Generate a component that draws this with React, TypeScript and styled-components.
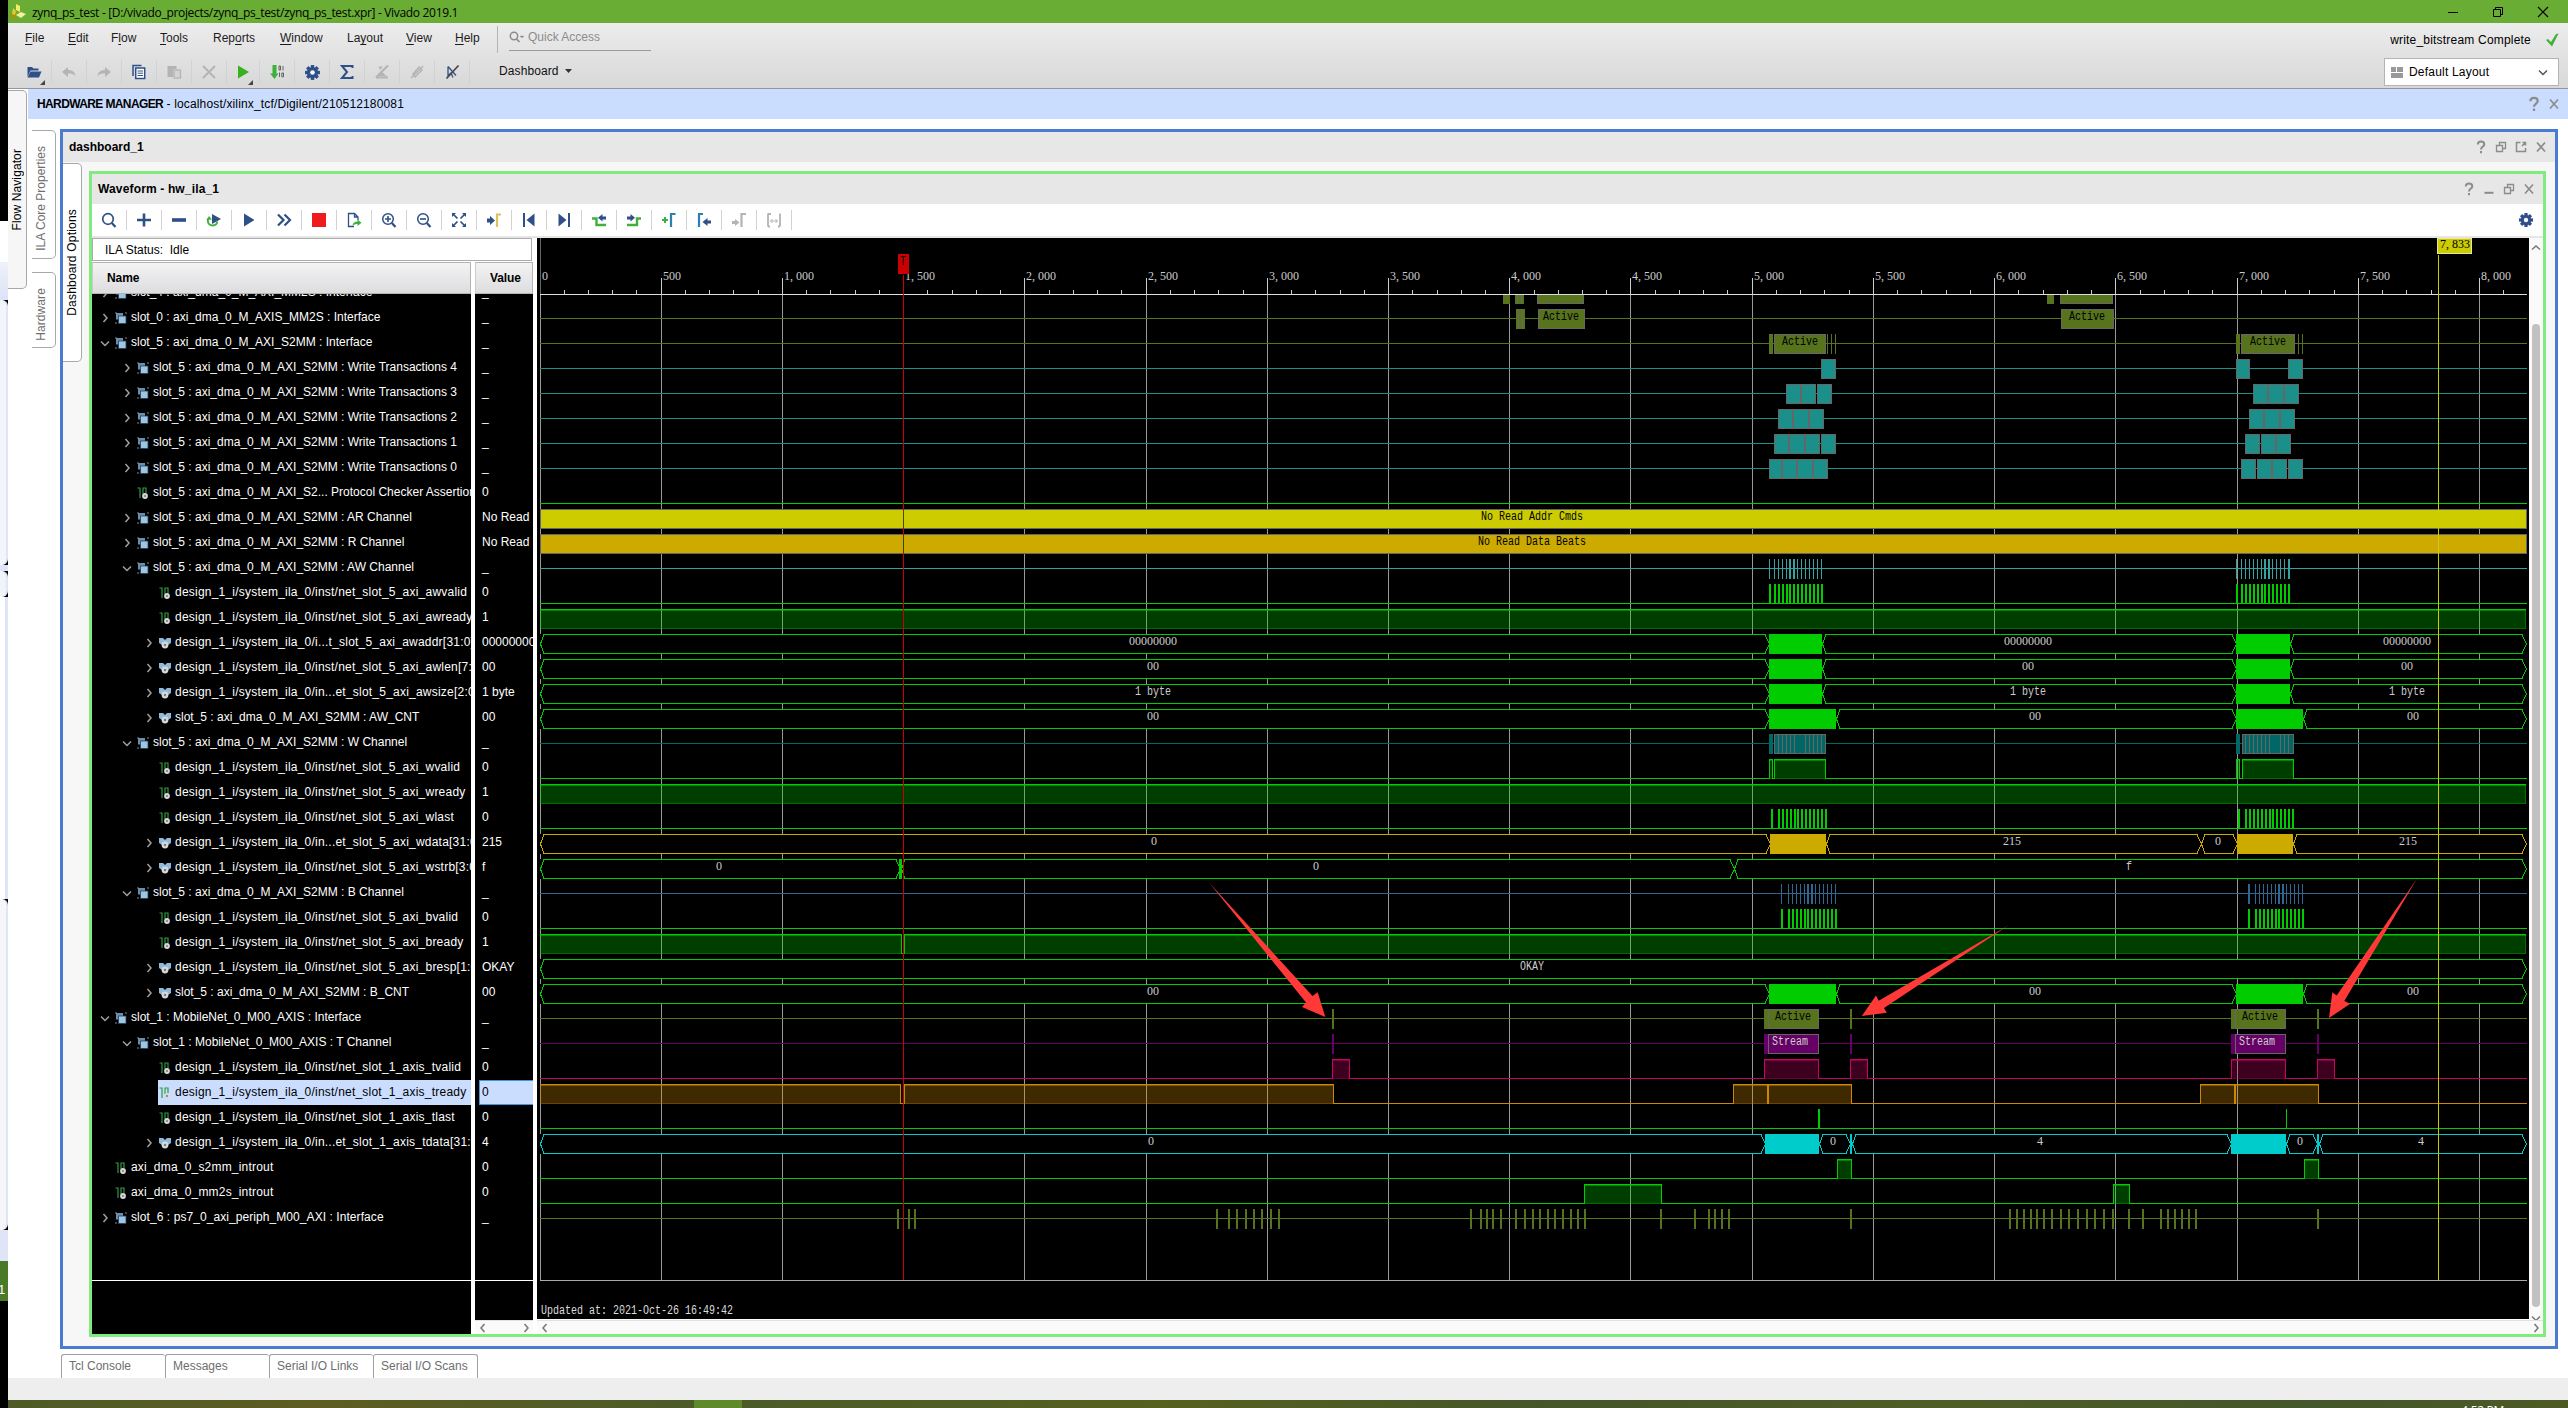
import React from "react";
import styled, { createGlobalStyle, css } from "styled-components";

const Global = createGlobalStyle`
  * { box-sizing: border-box; }
  html, body { margin: 0; padding: 0; background: #000; }
  body { width: 2568px; height: 1408px; overflow: hidden; font: 12px "Liberation Sans", Arial, sans-serif; color: #000; }
  svg { display: block; flex: none; }
`;

const Screen = styled.div`display: flex; width: 2568px; height: 1408px; overflow: hidden;`;

/* ---------- strip of the window behind ---------- */
const Strip = styled.div`width: 8px; display: flex; flex-direction: column; background: #000; overflow: hidden;`;
const StripPart = styled.div<{ $h: number; $bg: string }>`
  height: ${(p) => p.$h}px; flex: none; background: ${(p) => p.$bg}; color: #fff; font-size: 13px; overflow: hidden;
`;
const StripDigit = styled.div`margin: 21px 0 0 -2px;`;
const StripCard = styled.div<{ $h: number; $bg: string }>`
  height: ${(p) => p.$h}px; flex: none; background: ${(p) => p.$bg};
  border: 1px solid #f8faff; border-left: 0; border-right: 2px solid #e0e5f6; border-radius: 0 6px 6px 0;
`;

const Win = styled.div`flex: 1; display: flex; flex-direction: column; background: #fff; min-width: 0;`;

const TitleBar = styled.div`
  height: 23px; background: #6aad34; display: flex; align-items: center; padding-left: 1px; gap: 6px;
`;
const TitleText = styled.span`
  flex: 1; font: 12px/23px "Open Sans", "Noto Sans", sans-serif; letter-spacing: -0.32px; white-space: pre; padding-top: 2px;
`;
const WinButtons = styled.div`display: flex; gap: 33px; padding-right: 19px; height: 20px; align-items: center;`;

const Chrome = styled.div`
  height: 66px; display: flex; background: linear-gradient(#ececec, #d8d8d8); border-bottom: 1px solid #969696;
`;
const ChromeLeft = styled.div`flex: 1; display: flex; flex-direction: column;`;
const MenuRow = styled.div`height: 31px; display: flex; padding-left: 17px;`;
const MenuItem = styled.div<{ $w: number }>`
  width: ${(p) => p.$w}px; flex: none; line-height: 31px; color: #1c1c1c; white-space: pre;
  u { text-underline-offset: 2px; text-decoration-thickness: 1px; }
`;
const MenuRule = styled.div`width: 1px; height: 27px; margin: 3px 11px 0 0; background: #b4b4b4;`;
const Quick = styled.div`
  width: 142px; height: 28px; border-bottom: 1px solid #9a9a9a; display: flex; align-items: center; gap: 3px; color: #8c8c8c;
`;
const ToolRow = styled.div`height: 34px; display: flex; align-items: center; padding-left: 9px;`;
const ToolCell = styled.div<{ $w: number }>`
  width: ${(p) => p.$w}px; height: 24px; display: flex; align-items: center; justify-content: center; position: relative;
  border-right: 1px solid #d2d2d2; margin-top: 2px;
`;
const Corner = styled.i`
  position: absolute; right: 6px; bottom: -1px; width: 0; height: 0; border-left: 5px solid transparent; border-bottom: 5px solid #444;
`;
const DashMenu = styled.div`margin-left: 29px; display: flex; align-items: center; gap: 6px; color: #111; letter-spacing: 0.1px;`;
const ChromeRight = styled.div`width: 184px; padding-right: 9px; display: flex; flex-direction: column;`;
const Status = styled.div`
  height: 35px; display: flex; align-items: center; justify-content: flex-end; padding: 0 0 2px; gap: 14px; white-space: pre; letter-spacing: 0.2px;
`;
const Combo = styled.div`
  height: 28px; width: 175px; border: 1px solid #b4b4b4; background: #fff; display: flex; align-items: center; padding: 0 10px 0 6px; gap: 6px;
  letter-spacing: 0.2px;
  span { flex: 1; }
`;

const Body = styled.div`height: 1289px; display: flex;`;
const NavCol = styled.div`width: 20px;`;
const vtext = css`writing-mode: vertical-rl; transform: rotate(180deg); white-space: pre; line-height: 14px;`;
const VText = styled.span<{ $ls?: number }>`${vtext} letter-spacing: ${(p) => p.$ls ?? 0}px;`;
const SideTab = styled.div<{ $h: number; $w: number; $mt: number; $bg?: string; $fg?: string; $push?: number; $pr?: number }>`
  width: ${(p) => p.$w}px; height: ${(p) => p.$h}px; margin-top: ${(p) => p.$mt}px; flex: none;
  border: 1px solid #a8a8a8; border-left: 0; border-radius: 0 5px 5px 0; background: ${(p) => p.$bg ?? "#fff"};
  color: ${(p) => p.$fg ?? "#000"}; display: flex; justify-content: center; align-items: center;
  padding: ${(p) => p.$push ?? 0}px ${(p) => p.$pr ?? 0}px 0 0;
`;
const Main = styled.div`flex: 1; display: flex; flex-direction: column; min-width: 0;`;
const HwBar = styled.div`
  height: 30px; background: #cbddff; display: flex; align-items: center; padding: 0 6px 0 9px; white-space: pre;
  b { letter-spacing: -0.62px; }
  span { flex: 1; letter-spacing: 0.15px; }
`;
const Work = styled.div`flex: 1; display: flex; min-height: 0;`;
const SideTabs = styled.div`width: 32px; padding-left: 4px; display: flex; flex-direction: column;`;
const Center = styled.div`flex: 1; display: flex; flex-direction: column; padding: 10px 10px 0 0; min-width: 0;`;
const Dashboard = styled.div`
  height: 1220px; border: 3px solid #4a7bd0; background: #f7f7f7; display: flex; flex-direction: column;
`;
const PanelHead = styled.div<{ $ls?: number }>`
  height: 30px; flex: none; background: #e7e7e7; display: flex; align-items: center; font-weight: bold;
  padding: 0 6px; letter-spacing: ${(p) => p.$ls ?? 0}px;
  span { flex: 1; }
`;
const HeadIcons = styled.div<{ $gap?: number }>`display: flex; gap: ${(p) => p.$gap ?? 4}px; align-items: center;`;
const DashBody = styled.div`flex: 1; display: flex; min-height: 0;`;
const DashOptCol = styled.div`width: 26px; flex: none;`;
const Wave = styled.div`
  width: 2457px; height: 1166px; margin-top: 9px; border: 3px solid #82eb7d; background: #fff; display: flex; flex-direction: column;
`;
const WaveTools = styled.div`
  height: 34px; flex: none; border-bottom: 2px solid #e6e6e6; display: flex; align-items: center; padding-right: 9px;
`;
const WCell = styled.div`
  width: 35px; height: 20px; border-right: 1px solid #d2d2d2; display: flex; align-items: center; justify-content: center;
`;
const Grow = styled.div`flex: 1;`;

const WaveBody = styled.div`flex: 1; display: flex; min-height: 0;`;
const LeftPane = styled.div`width: 445px; flex: none; display: flex; flex-direction: column;`;
const IlaStatus = styled.div`
  width: 440px; height: 23px; border: 1px solid #ababab; line-height: 22px; padding-left: 12px; white-space: pre;
`;
const Cols = styled.div`flex: 1; display: flex; gap: 4px; margin-top: 1px; min-height: 0;`;
const NameCol = styled.div`width: 379px; display: flex; flex-direction: column;`;
const ValueCol = styled.div`width: 58px; display: flex; flex-direction: column;`;
const ColHead = styled.div`
  height: 32px; flex: none; border: 1px solid #b4b4b4; background: linear-gradient(#f3f3f3, #dddde0); font-weight: bold;
  line-height: 30px; padding-left: 14px; border-left-color: #ccc; letter-spacing: -0.1px;
`;
const List = styled.div`background: #000; color: #fff; flex: 1; overflow: hidden; display: flex; flex-direction: column; min-height: 0;`;
const ListRows = styled.div`height: 987px; flex: none; overflow: hidden; border-bottom: 1px solid #fff;`;
const Rows = styled.div`margin-top: -14px;`;
const Row = styled.div<{ $lv: number }>`
  height: 25px; padding-left: ${(p) => 8 + p.$lv * 22}px; display: flex; align-items: stretch; white-space: pre;
`;
const Twist = styled.div`width: 14px; display: flex; align-items: center; flex: none;`;
const NameCell = styled.div<{ $sel?: boolean; $ls: number }>`
  flex: 1; display: flex; align-items: center; gap: 4px; overflow: hidden; padding-left: 1px;
  background: ${(p) => (p.$sel ? "#cbddff" : "transparent")}; color: ${(p) => (p.$sel ? "#000" : "#fff")};
  letter-spacing: ${(p) => p.$ls}px;
  span { line-height: 24px; height: 25px; }
`;
const ValueCell = styled.div<{ $sel?: boolean }>`
  height: 25px; margin-left: 4px; padding-left: 2px; line-height: 22px; border: 1px solid ${(p) => (p.$sel ? "#3f97dd" : "transparent")};
  border-right-width: 0;
  background: ${(p) => (p.$sel ? "#cbddff" : "transparent")}; color: ${(p) => (p.$sel ? "#000" : "#fff")};
  white-space: pre; overflow: hidden;
`;
const HScroll = styled.div`
  height: 14px; flex: none; background: #fafafa; border-top: 1px solid #e2e2e2; display: flex; justify-content: space-between; align-items: center; padding: 0 2px 0 3px;
`;
const Right = styled.div`flex: 1; display: flex; flex-direction: column; min-width: 0;`;
const RightTop = styled.div`height: 1081px; display: flex; margin-bottom: 1px;`;
const VScroll = styled.div`
  width: 14px; background: #fafafa; display: flex; flex-direction: column; align-items: center; padding: 5px 0 1px;
`;
const Thumb = styled.div`width: 8px; height: 983px; margin: 71px 0 6px; border-radius: 4px; background: #c1c1c1; flex: none;`;

const BottomTabs = styled.div`display: flex; margin: 5px 0 0 1px;`;
const BottomTab = styled.div`
  width: 104px; height: 24px; border: 1px solid #a0a0a0; border-bottom: 0; border-right-width: 0; border-radius: 3px 3px 0 0;
  color: #6e6e6e; line-height: 22px; padding-left: 7px; white-space: pre;
  &:last-child { border-right-width: 1px; width: 105px; }
`;
const Foot = styled.div`height: 22px; background: #eee; flex: none;`;
const TaskBar = styled.div`
  height: 8px; background: linear-gradient(90deg, #4d5a25, #5e5c22 12%, #4a5a28 28%, #56601f 45%, #445529 60%, #4e5c26 75%, #43562b 90%, #4d5a25);
  display: flex; overflow: hidden; color: #fff;
`;
const TaskActive = styled.div`width: 48px; height: 8px; margin-left: 686px; background: #5f8a2c;`;
const Clock = styled.div`margin: 4px 64px 0 auto; font: 12px/14px "Open Sans", sans-serif; letter-spacing: -0.3px; white-space: pre;`;

/* ---------- icons ---------- */
const NAVY = "#2f4f88";
const GREEN = "#3fb03c";
const GREY = "#b4b4b4";
const Ico = ({ children, s = 16 }: { children: React.ReactNode; s?: number }) => (
  <svg width={s} height={s} viewBox="0 0 16 16" fill="none">{children}</svg>
);
const Gear = ({ s = 16 }: { s?: number }) => (
  <Ico s={s}>
    <g fill={NAVY}>
      {[0, 45, 90, 135].map((a) => <rect key={a} x="6.400" y="1" width="3.200" height="14" transform={`rotate(${a} 8 8)`} />)}
      <circle cx="8" cy="8" r="5.200" />
    </g>
    <circle cx="8" cy="8" r="2.200" fill="#f4f4f4" />
  </Ico>
);
const Q = ({ s = 12 }: { s?: number }) => (
  <svg width={s + 4} height={s + 4} viewBox="0 0 16 16" fill="none" stroke="#8c8c8c" strokeWidth="2">
    <path d="M4.800 5.600C4.800 3.600 6 2.600 8 2.600s3.300 1 3.300 2.800C11.300 7.500 8 7.800 8 10.500" /><path d="M8 12v2.200" />
  </svg>
);
const Cross = () => <Ico><path d="M4 3.500l8 9M12 3.500l-8 9" stroke="#8c8c8c" strokeWidth="1.700" /></Ico>;
const Restore = () => <Ico><path d="M6.500 6V3.500h6v6H10M3.500 6.500h6v6h-6z" stroke="#8c8c8c" strokeWidth="1.300" /></Ico>;
const Popout = () => <Ico><path d="M7.500 3.500h-4v9h9V9M9 7l3.500-3.500M9.500 3.500h3v3" stroke="#8c8c8c" strokeWidth="1.500" /></Ico>;
const Mini = () => <Ico><path d="M3.500 11.800h9" stroke="#8c8c8c" strokeWidth="2" /></Ico>;
const Chev = ({ d, c = "#777", s = 10 }: { d: "l" | "r" | "u" | "d"; c?: string; s?: number }) => {
  const p = { l: "M6.500 1L3 5l3.500 4", r: "M3.500 1L7 5 3.500 9", u: "M1 6.500L5 3l4 3.500", d: "M1 3.500L5 7.500l4-4" }[d];
  return <svg width={s} height={s} viewBox="0 0 10 10" fill="none"><path d={p} stroke={c} strokeWidth="1.500" /></svg>;
};

const mainIcons: React.ReactNode[] = [
  <Ico><path d="M1.500 13V3h4.500l1.500 1.500h5V6.500H4.500z" fill={NAVY} /><path d="M4.500 7.500h11l-2.500 6H1.500z" fill={NAVY} /></Ico>,
  <Ico><path d="M1 8l6-5v3c4 0 7 2 7.500 6-2-2-4-2.500-7.500-2.500V13z" fill={GREY} /></Ico>,
  <Ico><path d="M15 8L9 3v3C5 6 2 8 1.500 12c2-2 4-2.500 7.500-2.500V13z" fill={GREY} /></Ico>,
  <Ico><path d="M2 12V1.500h8.500" stroke={NAVY} strokeWidth="1.500" /><rect x="4.700" y="4" width="9" height="10.500" fill="#fff" stroke={NAVY} strokeWidth="1.500" /><path d="M6.500 7h5.500M6.500 9.200h5.500M6.500 11.500h5.500" stroke={NAVY} /></Ico>,
  <Ico><path d="M1.500 2h9v3H7v8H1.500z" fill={GREY} /><rect x="8" y="6" width="6.500" height="8" fill="#d4d4d4" stroke={GREY} strokeWidth="1.300" /></Ico>,
  <Ico><path d="M2 2l12 12M14 2L2 14" stroke={GREY} strokeWidth="2" /></Ico>,
  <Ico><path d="M3 1.500l11 6.500-11 6.500z" fill="#37b21f" /></Ico>,
  <Ico><path d="M3.500 1h4v8.500h2L5.500 15 1 9.500h2.500z" fill={GREEN} /><path d="M10 2h1.500v4H10zM14 2v4.500M10.500 8.500V13M12.800 9h1.700v3.800h-1.700z" stroke="#555" strokeWidth="0.900" /></Ico>,
  <Gear s={17} />,
  <Ico><path d="M13.500 4V2H3l5 6-5 6h10.500v-2" stroke={NAVY} strokeWidth="2" /></Ico>,
  <Ico><path d="M2 13.500h12" stroke={GREY} strokeWidth="2" /><path d="M3 12l4-5 6 5.500zM4.500 2.500h4.500L6 6z" fill={GREY} /><path d="M14 1.500L2 13.500" stroke={GREY} strokeWidth="2.200" /></Ico>,
  <Ico><path d="M14 2L2 14M4 10l6-7 3 3-7 7z" stroke={GREY} strokeWidth="1.500" /></Ico>,
  <Ico><path d="M4 2.500l8 9M4 2.500v9l3-2.500 2 4.500" stroke={NAVY} strokeWidth="1.300" /><path d="M14.500 1.500l-12 13" stroke="#4a4a4a" strokeWidth="1.800" /></Ico>,
];

const waveIcons: React.ReactNode[] = [
  <Ico><circle cx="7" cy="7" r="5.300" stroke={NAVY} strokeWidth="1.700" /><path d="M10.800 11L14.500 15" stroke={NAVY} strokeWidth="2.200" /></Ico>,
  <Ico><path d="M8 1.500v13M1 8h14" stroke={NAVY} strokeWidth="2.600" /></Ico>,
  <Ico><path d="M1 8h14" stroke={NAVY} strokeWidth="3.600" /></Ico>,
  <Ico><path d="M6 2l9 5-9 5z" fill={NAVY} /><path d="M2 6.500c-1 4 1 7 4.500 7S11.500 11 11 9.500" stroke={GREEN} strokeWidth="2" /><path d="M0.500 8L3 4l3 3.500z" fill={GREEN} /></Ico>,
  <Ico><path d="M3 1.500L13.500 8 3 14.500z" fill={NAVY} /></Ico>,
  <Ico><path d="M2 2.500L7.500 8 2 13.500M8.500 2.500L14 8l-5.500 5.500" stroke={NAVY} strokeWidth="2.200" /></Ico>,
  <Ico><rect x="1" y="1" width="14" height="14" fill="#ee1c1c" /></Ico>,
  <Ico><path d="M8 14.500H2.500v-13h6l3.500 3.500v3M8.500 1.500V5H12" stroke={NAVY} strokeWidth="1.300" /><path d="M6.500 14c0-3 2-4.500 5-4.500V7.500l4 3.300-4 3.200v-2c-2 0-3.500.500-5 2z" fill={GREEN} /></Ico>,
  <Ico><circle cx="7" cy="7" r="5.300" stroke={NAVY} strokeWidth="1.500" /><path d="M10.800 11L14.500 15" stroke={NAVY} strokeWidth="2.200" /><path d="M7 4v6M4 7h6" stroke={NAVY} strokeWidth="1.600" /></Ico>,
  <Ico><circle cx="7" cy="7" r="5.300" stroke={NAVY} strokeWidth="1.500" /><path d="M10.800 11L14.500 15" stroke={NAVY} strokeWidth="2.200" /><path d="M4 7h6" stroke={NAVY} strokeWidth="1.600" /></Ico>,
  <Ico><path d="M1 5V1h4zM11 1h4v4zM15 11v4h-4zM5 15H1v-4z" fill={NAVY} /><path d="M2 2l4.500 4.500M14 2L9.500 6.500M14 14L9.500 9.500M2 14l4.500-4.500" stroke={NAVY} strokeWidth="1.700" /></Ico>,
  <Ico><path d="M1 6.500h3V4l5 4.500-5 4.500v-2.500H1z" fill={NAVY} /><path d="M11 15V2.500h4" stroke="#dfc15a" strokeWidth="2.200" /></Ico>,
  <Ico><path d="M3 1v14" stroke={NAVY} strokeWidth="2" /><path d="M13.500 1.500v13L5.500 8z" fill={NAVY} /></Ico>,
  <Ico><path d="M13 1v14" stroke={NAVY} strokeWidth="2" /><path d="M2.500 1.500v13L10.500 8z" fill={NAVY} /></Ico>,
  <Ico><path d="M1 6.500h4.500v6.500H15" stroke={GREEN} strokeWidth="2.400" /><path d="M15 4.500h-3.500V2L7 5.800 11.500 9.500V7.500H15z" fill={NAVY} /></Ico>,
  <Ico><path d="M15 6.500h-4v6.500H1" stroke={GREEN} strokeWidth="2.400" /><path d="M1 4.500h3.500V2L9 5.800 4.500 9.500V7.500H1z" fill={NAVY} /></Ico>,
  <Ico><path d="M1 8h6M4 5v6" stroke={GREEN} strokeWidth="2" /><path d="M10 15V2h4.500" stroke="#2e7fb4" strokeWidth="2.200" /></Ico>,
  <Ico><path d="M3 15V2h4" stroke="#2e7fb4" strokeWidth="2.200" /><path d="M15 8.500h-3.500V6L6.500 10l5 4v-2.500H15z" fill={NAVY} /></Ico>,
  <Ico><path d="M1 9h3V7l4.500 3.500L4 14v-2H1z" fill={GREY} /><path d="M10.500 15V2h4.500" stroke={GREY} strokeWidth="2.200" /></Ico>,
  <Ico><path d="M2 1.500v13M5 2H2M14 1.500v13M2 14.500h2M12 14.500h2" stroke={GREY} strokeWidth="1.800" /><path d="M4.500 9h7M6.500 7L4.500 9l2 2M9.500 7l2 2-2 2" stroke={GREY} /></Ico>,
];

const TreeIcon = ({ k }: { k: "i" | "s" | "b" }) => {
  if (k === "i")
    return (
      <svg width="12" height="12" viewBox="0 0 12 12">
        <path d="M0 0h2v2H0zM10 0h2v2h-2zM0 10h2v2H0z" fill="#444" />
        <rect x="1" y="1" width="7" height="6.500" fill="#6a8fae" />
        <rect x="3.500" y="4" width="7.500" height="7.500" fill="#9cc6e6" stroke="#2c3e50" strokeWidth="0.800" />
      </svg>
    );
  if (k === "s")
    return (
      <svg width="12" height="12" viewBox="0 0 12 12" fill="none">
        <path d="M0.500 1h2.500v10M6 7V1h3v5" stroke="#2f9b45" strokeWidth="1.200" />
        <circle cx="8" cy="9" r="2.900" fill="#d8d8d8" /><circle cx="8" cy="9" r="1" fill="#777" />
      </svg>
    );
  return (
    <svg width="12" height="12" viewBox="0 0 12 12">
      <path d="M0 1h4l2 2 2-2h4v5L9 8H3L0 6z" fill="#8fb9d8" />
      <circle cx="6" cy="8" r="3.400" fill="#d8d8d8" /><circle cx="6" cy="8" r="1.200" fill="#777" />
    </svg>
  );
};

/* ---------- signal tree ---------- */
type Item = [number, "i" | "s" | "b", "r" | "d" | "", string, string];
const M = "slot_5 : axi_dma_0_M_AXI_S2MM : ";
const D = "design_1_i/system_ila_0/";
const items: Item[] = [
  [0, "i", "r", "slot_4 : axi_dma_0_M_AXI_MM2S : Interface", "_"],
  [0, "i", "r", "slot_0 : axi_dma_0_M_AXIS_MM2S : Interface", "_"],
  [0, "i", "d", M + "Interface", "_"],
  [1, "i", "r", M + "Write Transactions 4", "_"],
  [1, "i", "r", M + "Write Transactions 3", "_"],
  [1, "i", "r", M + "Write Transactions 2", "_"],
  [1, "i", "r", M + "Write Transactions 1", "_"],
  [1, "i", "r", M + "Write Transactions 0", "_"],
  [1, "s", "", "slot_5 : axi_dma_0_M_AXI_S2... Protocol Checker Assertion", "0"],
  [1, "i", "r", M + "AR Channel", "No Read"],
  [1, "i", "r", M + "R Channel", "No Read"],
  [1, "i", "d", M + "AW Channel", "_"],
  [2, "s", "", D + "inst/net_slot_5_axi_awvalid", "0"],
  [2, "s", "", D + "inst/net_slot_5_axi_awready", "1"],
  [2, "b", "r", D + "i...t_slot_5_axi_awaddr[31:0]", "00000000"],
  [2, "b", "r", D + "inst/net_slot_5_axi_awlen[7:0]", "00"],
  [2, "b", "r", D + "in...et_slot_5_axi_awsize[2:0]", "1 byte"],
  [2, "b", "r", M + "AW_CNT", "00"],
  [1, "i", "d", M + "W Channel", "_"],
  [2, "s", "", D + "inst/net_slot_5_axi_wvalid", "0"],
  [2, "s", "", D + "inst/net_slot_5_axi_wready", "1"],
  [2, "s", "", D + "inst/net_slot_5_axi_wlast", "0"],
  [2, "b", "r", D + "in...et_slot_5_axi_wdata[31:0]", "215"],
  [2, "b", "r", D + "inst/net_slot_5_axi_wstrb[3:0]", "f"],
  [1, "i", "d", M + "B Channel", "_"],
  [2, "s", "", D + "inst/net_slot_5_axi_bvalid", "0"],
  [2, "s", "", D + "inst/net_slot_5_axi_bready", "1"],
  [2, "b", "r", D + "inst/net_slot_5_axi_bresp[1:0]", "OKAY"],
  [2, "b", "r", M + "B_CNT", "00"],
  [0, "i", "d", "slot_1 : MobileNet_0_M00_AXIS : Interface", "_"],
  [1, "i", "d", "slot_1 : MobileNet_0_M00_AXIS : T Channel", "_"],
  [2, "s", "", D + "inst/net_slot_1_axis_tvalid", "0"],
  [2, "s", "", D + "inst/net_slot_1_axis_tready", "0"],
  [2, "s", "", D + "inst/net_slot_1_axis_tlast", "0"],
  [2, "b", "r", D + "in...et_slot_1_axis_tdata[31:0]", "4"],
  [0, "s", "", "axi_dma_0_s2mm_introut", "0"],
  [0, "s", "", "axi_dma_0_mm2s_introut", "0"],
  [0, "i", "r", "slot_6 : ps7_0_axi_periph_M00_AXI : Interface", "_"],
];
const SELECTED = 32;
const tracking = (name: string) => (name.startsWith("design") ? 0.22 : name.startsWith("axi") ? 0.2 : name.startsWith("slot_6") ? 0.07 : 0);

/* ---------- wave form ---------- */
const X0 = 540;
const X1 = 2526;
type Pair = [number, number];
type Box = [number, number, string?];
type Trace =
  | { k: "txn"; c: string; boxes?: Box[]; solid?: Pair[]; ticks?: Pair[]; seams?: number[]; noLine?: boolean; light?: boolean }
  | { k: "bit"; c: string; highs?: Pair[]; bars?: Pair[] }
  | { k: "bus"; c: string; segs: Box[]; blocks?: Pair[] };

const OLIVE = "#57731b";
const TEAL = "#1b8f89";
const LIME = "#00cc00";
const w = (n: number, xs: number[]): Pair[] => xs.map((x) => [x, n]);
const fat = (xs: number[], f: number[]): Pair[] => xs.map((x, i) => [x, f.includes(i) ? 2 : 1]);
const AWX = [1769, 1774, 1778, 1782, 1786, 1789, 1793, 1797, 1801, 1805, 1809, 1813, 1817, 1821];
const AWX2 = [2236, 2241, 2245, 2249, 2253, 2257, 2261, 2264, 2268, 2272, 2276, 2280, 2284, 2288];
const BX = [1781, 1788, 1792, 1796, 1800, 1804, 1807, 1811, 1815, 1819, 1823, 1827, 1831, 1835];
const BX2 = [2248, 2255, 2259, 2263, 2267, 2271, 2275, 2278, 2282, 2286, 2290, 2294, 2298, 2302];
const WL = [
  1771, 1778, 1782, 1786, 1790, 1794, 1797, 1801, 1805, 1809, 1813, 1817, 1821, 1825,
  2238, 2245, 2249, 2253, 2257, 2261, 2265, 2269, 2272, 2276, 2280, 2284, 2288, 2292,
];
const SEAM = [1778, 1782, 1786, 1790, 1794, 1805, 1809, 1813, 1817, 1821, 2245, 2249, 2253, 2257, 2261, 2265, 2269, 2280, 2284, 2288];
const awBus = (label: string): Trace => ({
  k: "bus", c: LIME, segs: [[X0, 1769, label], [1822, 2236, label], [2290, X1, label]], blocks: [[1769, 1822], [2236, 2290]],
});
const cntBus: Trace = { k: "bus", c: LIME, segs: [[X0, 1769, "00"], [1836, 2236, "00"], [2303, X1, "00"]], blocks: [[1769, 1836], [2236, 2303]] };

const traces: Trace[] = [
  { k: "txn", c: OLIVE, solid: [[1503, 1510], [1515, 1524], [2047, 2054]], seams: [1517, 1521], boxes: [[1537, 1584], [2060, 2113]], noLine: true },
  { k: "txn", c: OLIVE, solid: [[1516, 1525]], seams: [1518, 1522], boxes: [[1538, 1585, "Active"], [2061, 2114, "Active"]] },
  { k: "txn", c: OLIVE, solid: [[1769, 1773], [2236, 2240]], boxes: [[1774, 1826, "Active"], [2241, 2295, "Active"]], ticks: w(1, [1827, 1831, 1835, 2298, 2302]) },
  { k: "txn", c: TEAL, boxes: [[1821, 1836], [2236, 2250], [2288, 2303]] },
  { k: "txn", c: TEAL, boxes: [[1786, 1801], [1801, 1816], [1817, 1832], [2253, 2268], [2268, 2284], [2284, 2299]] },
  { k: "txn", c: TEAL, boxes: [[1778, 1793], [1793, 1809], [1809, 1824], [2249, 2264], [2264, 2280], [2280, 2295]] },
  { k: "txn", c: TEAL, boxes: [[1774, 1789], [1789, 1805], [1805, 1820], [1821, 1836], [2245, 2260], [2261, 2276], [2276, 2291]] },
  { k: "txn", c: TEAL, boxes: [[1769, 1782], [1782, 1797], [1797, 1813], [1813, 1828], [2241, 2256], [2257, 2272], [2272, 2287], [2288, 2303]] },
  { k: "bit", c: LIME },
  { k: "txn", c: "#cccc00", boxes: [[X0, X1 + 1, "No Read Addr Cmds"]] },
  { k: "txn", c: "#ccaa00", boxes: [[X0, X1 + 1, "No Read Data Beats"]] },
  { k: "txn", c: "#35a29f", ticks: [...fat(AWX, [5, 6]), ...fat(AWX2, [7, 8, 13])] },
  { k: "bit", c: LIME, bars: w(2, [...AWX, ...AWX2]) },
  { k: "bit", c: LIME, highs: [[X0, X1]] },
  awBus("00000000"),
  awBus("00"),
  awBus("1 byte"),
  cntBus,
  { k: "txn", c: "#006666", solid: [[1769, 1773], [2236, 2240]], boxes: [[1774, 1826], [2242, 2294]], seams: SEAM },
  { k: "bit", c: LIME, highs: [[1769, 1773], [1774, 1826], [2236, 2240], [2242, 2294]] },
  { k: "bit", c: LIME, highs: [[X0, X1]] },
  { k: "bit", c: LIME, bars: w(2, WL) },
  { k: "bus", c: "#ccaa00", segs: [[X0, 1770, "0"], [1826, 2201, "215"], [2201, 2237, "0"], [2293, X1, "215"]], blocks: [[1770, 1826], [2237, 2293]] },
  { k: "bus", c: LIME, segs: [[X0, 900, "0"], [901, 1734, "0"], [1734, X1, "f"]], blocks: [[899, 902]] },
  { k: "txn", c: "#2f6792", ticks: [...fat(BX, [6, 7]), ...fat(BX2, [0, 7, 8])] },
  { k: "bit", c: LIME, bars: w(2, [...BX, ...BX2]) },
  { k: "bit", c: LIME, highs: [[X0, 902], [904, X1]] },
  { k: "bus", c: LIME, segs: [[X0, X1, "OKAY"]] },
  cntBus,
  { k: "txn", c: OLIVE, solid: [[1764, 1768], [2231, 2235]], boxes: [[1768, 1819, "Active"], [2235, 2286, "Active"]], ticks: w(2, [1332, 1850, 2317]) },
  { k: "txn", c: "#660066", light: true, solid: [[1764, 1768], [2231, 2235]], boxes: [[1768, 1819, "Stream"], [2235, 2286, "Stream"]], ticks: w(2, [1332, 1850, 2317]) },
  { k: "bit", c: "#cc0066", highs: [[1332, 1350], [1764, 1819], [1850, 1868], [2231, 2286], [2317, 2335]] },
  { k: "bit", c: "#cc8800", highs: [[X0, 901], [904, 1334], [1733, 1768], [1768, 1852], [2200, 2235], [2235, 2319]] },
  { k: "bit", c: LIME, bars: [[1818, 2], [2286, 1]] },
  { k: "bus", c: "#00cccc", segs: [[X0, 1765, "0"], [1819, 1850, "0"], [1852, 2231, "4"], [2286, 2317, "0"], [2319, X1, "4"]], blocks: [[1765, 1819], [1850, 1852], [2231, 2286], [2317, 2319]] },
  { k: "bit", c: LIME, highs: [[1837, 1852], [2304, 2319]] },
  { k: "bit", c: LIME, highs: [[1584, 1662], [2113, 2130]] },
  {
    k: "txn", c: OLIVE,
    ticks: w(2, [
      897, 908, 914, 1216, 1228, 1236, 1245, 1253, 1261, 1270, 1278, 1470, 1480, 1486, 1492, 1500, 1515, 1524, 1532, 1539, 1547, 1554, 1562, 1570, 1577, 1584,
      1660, 1694, 1708, 1714, 1721, 1728, 1850, 2009, 2016, 2023, 2030, 2036, 2043, 2051, 2060, 2068, 2077, 2086, 2094, 2103, 2112, 2128, 2142, 2160, 2167, 2174, 2181, 2188, 2195, 2317,
    ]),
  },
];

const SERIF = '"Liberation Serif", "Times New Roman", serif';
const MONO = '"Liberation Mono", "Courier New", monospace';
const Label = ({ x, y, t, c }: { x: number; y: number; t: string; c: string }) => {
  if (/^\d+$/.test(t))
    return <text x={x} y={y} fontFamily={SERIF} fontSize="12" fill={c}>{t}</text>;
  if (/^[\d,]+$/.test(t))
    return <text x={[...t].map((_, i) => x + i * 6).join(" ")} y={y} fontFamily={SERIF} fontSize="12" fill={c}>{t}</text>;
  return (
    <text x={x} y={y} fontFamily={MONO} fontSize="12" fill={c} textLength={t.length * 6} lengthAdjust="spacingAndGlyphs" xmlSpace="preserve">{t}</text>
  );
};
const R = ({ x, y, w, h, c, o }: { x: number; y: number; w: number; h: number; c: string; o?: number }) => (
  <rect x={x} y={y} width={Math.max(w, 0)} height={h} fill={c} fillOpacity={o} />
);

const TraceRow = ({ t, y }: { t: Trace; y: number }) => {
  if (t.k === "txn")
    return (
      <g>
        {!t.noLine && <R x={X0} y={y + 13} w={X1 - X0 + 1} h={1} c={t.c} />}
        {t.solid?.map(([a, b]) => <R key={a} x={a} y={y + 4} w={b - a} h={20} c={t.c} />)}
        {t.ticks?.map(([a, n]) => <R key={a} x={a} y={y + 4} w={n} h={20} c={t.c} />)}
        {t.boxes?.map(([a, b]) => (
          <rect key={a} x={a + 0.5} y={y + 4.5} width={b - a - 1} height={19} fill={t.c} stroke="#666" />
        ))}
        {t.seams?.map((a) => <R key={a} x={a} y={y + 4} w={1} h={20} c="#666" />)}
        {t.boxes?.map(([a, b, l]) => l && (
          <Label key={a} x={Math.floor((a + b) / 2 - l.length * 3) - (t.light ? 3 : 0) - (b - a > 60 ? 1 : 0)} y={y + 15} t={l} c={t.light ? "#ccc" : "#000"} />
        ))}
      </g>
    );
  if (t.k === "bit") {
    const hs = t.highs ?? [];
    const lows: Pair[] = [];
    let at = X0;
    hs.forEach(([a, b]) => { if (a > at) lows.push([at, a]); at = b; });
    if (at < X1) lows.push([at, X1 + 1]);
    return (
      <g>
        {hs.map(([a, b]) => (
          <g key={a}>
            <R x={a} y={y + 4} w={b - a} h={20} c={t.c} o={0.3} />
            <R x={a} y={y + 4} w={b - a} h={1} c={t.c} />
            <R x={a} y={y + 5} w={b - a} h={1} c={t.c} o={0.5} />
            <R x={a} y={y + 23} w={b - a} h={1} c={t.c} o={0.3} />
            <R x={a} y={y + 4} w={1} h={20} c={t.c} o={a === X0 ? 0.3 : 1} />
            <R x={b - 1} y={y + 4} w={1} h={20} c={t.c} o={b === X1 ? 0.3 : 1} />
          </g>
        ))}
        {lows.map(([a, b]) => <R key={a} x={a} y={y + 23} w={b - a} h={1} c={t.c} />)}
        {t.bars?.map(([a, n]) => <R key={a} x={a} y={y + 4} w={n} h={20} c={t.c} />)}
      </g>
    );
  }
  return (
    <g>
      {t.segs.map(([a, b, l]) => (
        <g key={a}>
          <R x={a} y={y + 4} w={b - a} h={20} c="#000" />
          <path d={`M${a + 0.5} ${y + 14}L${a + 4} ${y + 4.5}H${b - 4}L${b + 0.5} ${y + 14}L${b - 4} ${y + 23.5}H${a + 4}Z`} stroke={t.c} fill="#000" />
          {l && <Label x={Math.floor((a + b) / 2 - l.length * 3) - 1} y={y + 15} t={l} c="#ccc" />}
        </g>
      ))}
      {t.blocks?.map(([a, b]) => <R key={a} x={a} y={y + 4} w={b - a} h={20} c={t.c} />)}
    </g>
  );
};

const ruler = Array.from({ length: 82 }, (_, i) => i * 100);
const tx = (t: number) => Math.floor(X0 + t * 0.24244);
const thousands = (n: number) => String(n).replace(/(\d)(\d{3})$/, "$1,$2");

const WaveCanvas = () => (
  <svg width="1992" height="1081" viewBox="537 238 1992 1081" shapeRendering="crispEdges">
    <defs><clipPath id="below"><rect x="537" y="295" width="1992" height="1024" /></clipPath></defs>
    <R x={537} y={238} w={1992} h={1081} c="#000" />
    {ruler.filter((t) => t % 500 === 0).map((t) => (
      <g key={t}>
        <R x={tx(t)} y={295} w={1} h={985} c="#999" />
        <R x={tx(t)} y={t ? 278 : 238} w={1} h={t ? 16 : 56} c={t ? "#ccc" : "#666"} />
        <Label x={tx(t) + 2} y={280} t={thousands(t)} c="#ccc" />
      </g>
    ))}
    {ruler.filter((t) => t % 500).map((t) => <R key={t} x={tx(t)} y={290} w={1} h={4} c="#ccc" />)}
    <R x={X0} y={294} w={1987} h={1} c="#ddd" />
    <R x={X0} y={1280} w={1987} h={1} c="#aaa" />
    <g clipPath="url(#below)">
      {traces.map((t, i) => <TraceRow key={i} t={t} y={280 + i * 25} />)}
    </g>
    <R x={903} y={275} w={1} h={1005} c="#cc0000" />
    <R x={903} y={510} w={1} h={18} c="#4d4600" />
    <R x={903} y={535} w={1} h={18} c="#4d3c00" />
    <R x={898} y={254} w={11} h={20} c="#cc0000" />
    <Label x={900} y={265} t="T" c="#000" />
    <R x={2438} y={255} w={1} h={1025} c="#cccc00" />
    <rect x={2437.5} y={238.5} width={34} height={15} fill="#cccc00" stroke="#e6e69a" />
    <Label x={2440} y={248} t="7,833" c="#000" />
    <Label x={541} y={1314} t="Updated at: 2021-Oct-26 16:49:42" c="#ddd" />
    <g fill="#ff3838" shapeRendering="auto">
      <path d="M1209 882.500L1312.500 996L1317.700 992.300L1325.300 1017L1302 1007L1306 1002.500Z" />
      <path d="M2009 925L1878.700 1000.700L1876 995.500L1861.800 1016L1886.800 1012.700L1884 1008Z" />
      <path d="M2417.300 878.300L2336.700 995.500L2332.300 992.200L2329 1018L2350.300 1003.800L2344.300 1001Z" />
    </g>
  </svg>
);

const menus: [string, string, string, number][] = [
  ["", "F", "ile", 43], ["", "E", "dit", 43], ["F", "l", "ow", 49], ["", "T", "ools", 53], ["Rep", "o", "rts", 67],
  ["", "W", "indow", 67], ["La", "y", "out", 59], ["", "V", "iew", 49], ["", "H", "elp", 42],
];

export default function App() {
  return (
    <>
      <Global />
      <Screen>
        <Strip>
          <StripPart $h={221} $bg="#000" />
          <StripPart $h={41} $bg="#fff" />
          <StripPart $h={38} $bg="linear-gradient(#eef1fb, #dde3f5)" />
          <StripCard $h={265} $bg="#f3f5fc" />
          <StripPart $h={6} $bg="#dfe5f7" />
          <StripCard $h={26} $bg="#eff3fb" />
          <StripPart $h={302} $bg="linear-gradient(90deg, #fff 5px, #e0e5f6 5px)" />
          <StripCard $h={331} $bg="#f5f5fa" />
          <StripPart $h={31} $bg="#dfe5f7" />
          <StripPart $h={40} $bg="#4b7a26"><StripDigit>1</StripDigit></StripPart>
        </Strip>
        <Win>
          <TitleBar>
            <svg width="17" height="17" viewBox="0 0 17 17">
              <path d="M7 1l4 2v6L7 7z" fill="#f2ec6a" /><path d="M1 14l3-7 4 3-2 6z" fill="#a5920f" /><path d="M7 12l5-3 5 2-5 4z" fill="#f4f0a0" />
              <path d="M4 5l3 3-1 4-3-1z" fill="#d8cf3a" />
            </svg>
            <TitleText>zynq_ps_test - [D:/vivado_projects/zynq_ps_test/zynq_ps_test.xpr] - Vivado 2019.1</TitleText>
            <WinButtons>
              <svg width="12" height="12"><path d="M1 6.500h10" stroke="#000" /></svg>
              <svg width="12" height="12" fill="none" stroke="#000"><path d="M3.500 3V1.500h7v7H9M1.500 3.500h7v7h-7z" /></svg>
              <svg width="12" height="12"><path d="M1 1l10 10M11 1L1 11" stroke="#000" strokeWidth="1.200" /></svg>
            </WinButtons>
          </TitleBar>
          <Chrome>
            <ChromeLeft>
              <MenuRow>
                {menus.map(([a, u, b, n]) => <MenuItem key={u + b} $w={n}>{a}<u>{u}</u>{b}</MenuItem>)}
                <MenuRule />
                <Quick>
                  <svg width="16" height="12" viewBox="0 0 16 12" fill="none" stroke="#8c8c8c">
                    <circle cx="5" cy="5" r="3.700" strokeWidth="1.500" /><path d="M7.500 8l3 3" strokeWidth="1.700" /><path d="M11 5h4l-2 2z" fill="#8c8c8c" strokeWidth="0.300" />
                  </svg>
                  Quick Access
                </Quick>
              </MenuRow>
              <ToolRow>
                {mainIcons.map((ic, i) => (
                  <ToolCell key={i} $w={i === 6 ? 33 : 35}>{ic}{(i === 0 || i === 6) && <Corner />}</ToolCell>
                ))}
                <DashMenu>Dashboard<svg width="7" height="5"><path d="M0 0h7l-3.500 4z" fill="#333" /></svg></DashMenu>
              </ToolRow>
            </ChromeLeft>
            <ChromeRight>
              <Status>write_bitstream Complete
                <svg width="14" height="14" viewBox="0 0 14 14"><path d="M1 7l2-1 3 3 5-8 2.500-.500-6.500 13z" fill="#3fb03c" /></svg>
              </Status>
              <Combo>
                <svg width="12" height="11"><path d="M0 0h5v5H0zM6 0h6v5H6zM0 6h12v5H0z" fill="#999" /></svg>
                <span>Default Layout</span>
                <Chev d="d" c="#555" />
              </Combo>
            </ChromeRight>
          </Chrome>
          <Body>
            <NavCol>
              <SideTab $w={19} $h={199} $mt={1} $bg="#f6f6f6"><VText $ls={0.1}>Flow Navigator</VText></SideTab>
            </NavCol>
            <Main>
              <HwBar>
                <b>HARDWARE MANAGER</b><span> - localhost/xilinx_tcf/Digilent/210512180081</span>
                <HeadIcons $gap={3}><Q s={14} /><Cross /></HeadIcons>
              </HwBar>
              <Work>
                <SideTabs>
                  <SideTab $w={24} $h={129} $mt={11} $fg="#6e6e6e" $push={8} $pr={6}><VText>ILA Core Properties</VText></SideTab>
                  <SideTab $w={24} $h={76} $mt={13} $fg="#6e6e6e" $push={8} $pr={6}><VText $ls={0.1}>Hardware</VText></SideTab>
                </SideTabs>
                <Center>
                  <Dashboard>
                    <PanelHead><span>dashboard_1</span><HeadIcons><Q /><Restore /><Popout /><Cross /></HeadIcons></PanelHead>
                    <DashBody>
                      <DashOptCol>
                        <SideTab $w={19} $h={199} $mt={1}><VText $ls={0.2}>Dashboard Options</VText></SideTab>
                      </DashOptCol>
                      <Wave>
                        <PanelHead $ls={0.15}><span>Waveform - hw_ila_1</span><HeadIcons><Q /><Mini /><Restore /><Cross /></HeadIcons></PanelHead>
                        <WaveTools>
                          {waveIcons.map((ic, i) => <WCell key={i}>{ic}</WCell>)}
                          <Grow /><Gear />
                        </WaveTools>
                        <WaveBody>
                          <LeftPane>
                            <IlaStatus>ILA Status:  Idle</IlaStatus>
                            <Cols>
                              <NameCol>
                                <ColHead>Name</ColHead>
                                <List>
                                  <ListRows>
                                    <Rows>
                                      {items.map(([lv, k, tw, name], i) => (
                                        <Row key={i} $lv={lv}>
                                          <Twist>{tw && <Chev d={tw} c="#a0a0a0" />}</Twist>
                                          <NameCell $sel={i === SELECTED} $ls={tracking(name)}><TreeIcon k={k} /><span>{name}</span></NameCell>
                                        </Row>
                                      ))}
                                    </Rows>
                                  </ListRows>
                                </List>
                              </NameCol>
                              <ValueCol>
                                <ColHead>Value</ColHead>
                                <List>
                                  <ListRows>
                                    <Rows>{items.map((it, i) => <ValueCell key={i} $sel={i === SELECTED}>{it[4]}</ValueCell>)}</Rows>
                                  </ListRows>
                                </List>
                                <HScroll><Chev d="l" /><Chev d="r" /></HScroll>
                              </ValueCol>
                            </Cols>
                          </LeftPane>
                          <Right>
                            <RightTop>
                              <WaveCanvas />
                              <VScroll><Chev d="u" /><Thumb /><Chev d="d" /></VScroll>
                            </RightTop>
                            <HScroll><Chev d="l" /><Chev d="r" /></HScroll>
                          </Right>
                        </WaveBody>
                      </Wave>
                    </DashBody>
                  </Dashboard>
                  <BottomTabs>
                    {["Tcl Console", "Messages", "Serial I/O Links", "Serial I/O Scans"].map((t) => <BottomTab key={t}>{t}</BottomTab>)}
                  </BottomTabs>
                </Center>
              </Work>
            </Main>
          </Body>
          <Foot />
          <TaskBar><TaskActive /><Clock>4:52 PM</Clock></TaskBar>
        </Win>
      </Screen>
    </>
  );
}
